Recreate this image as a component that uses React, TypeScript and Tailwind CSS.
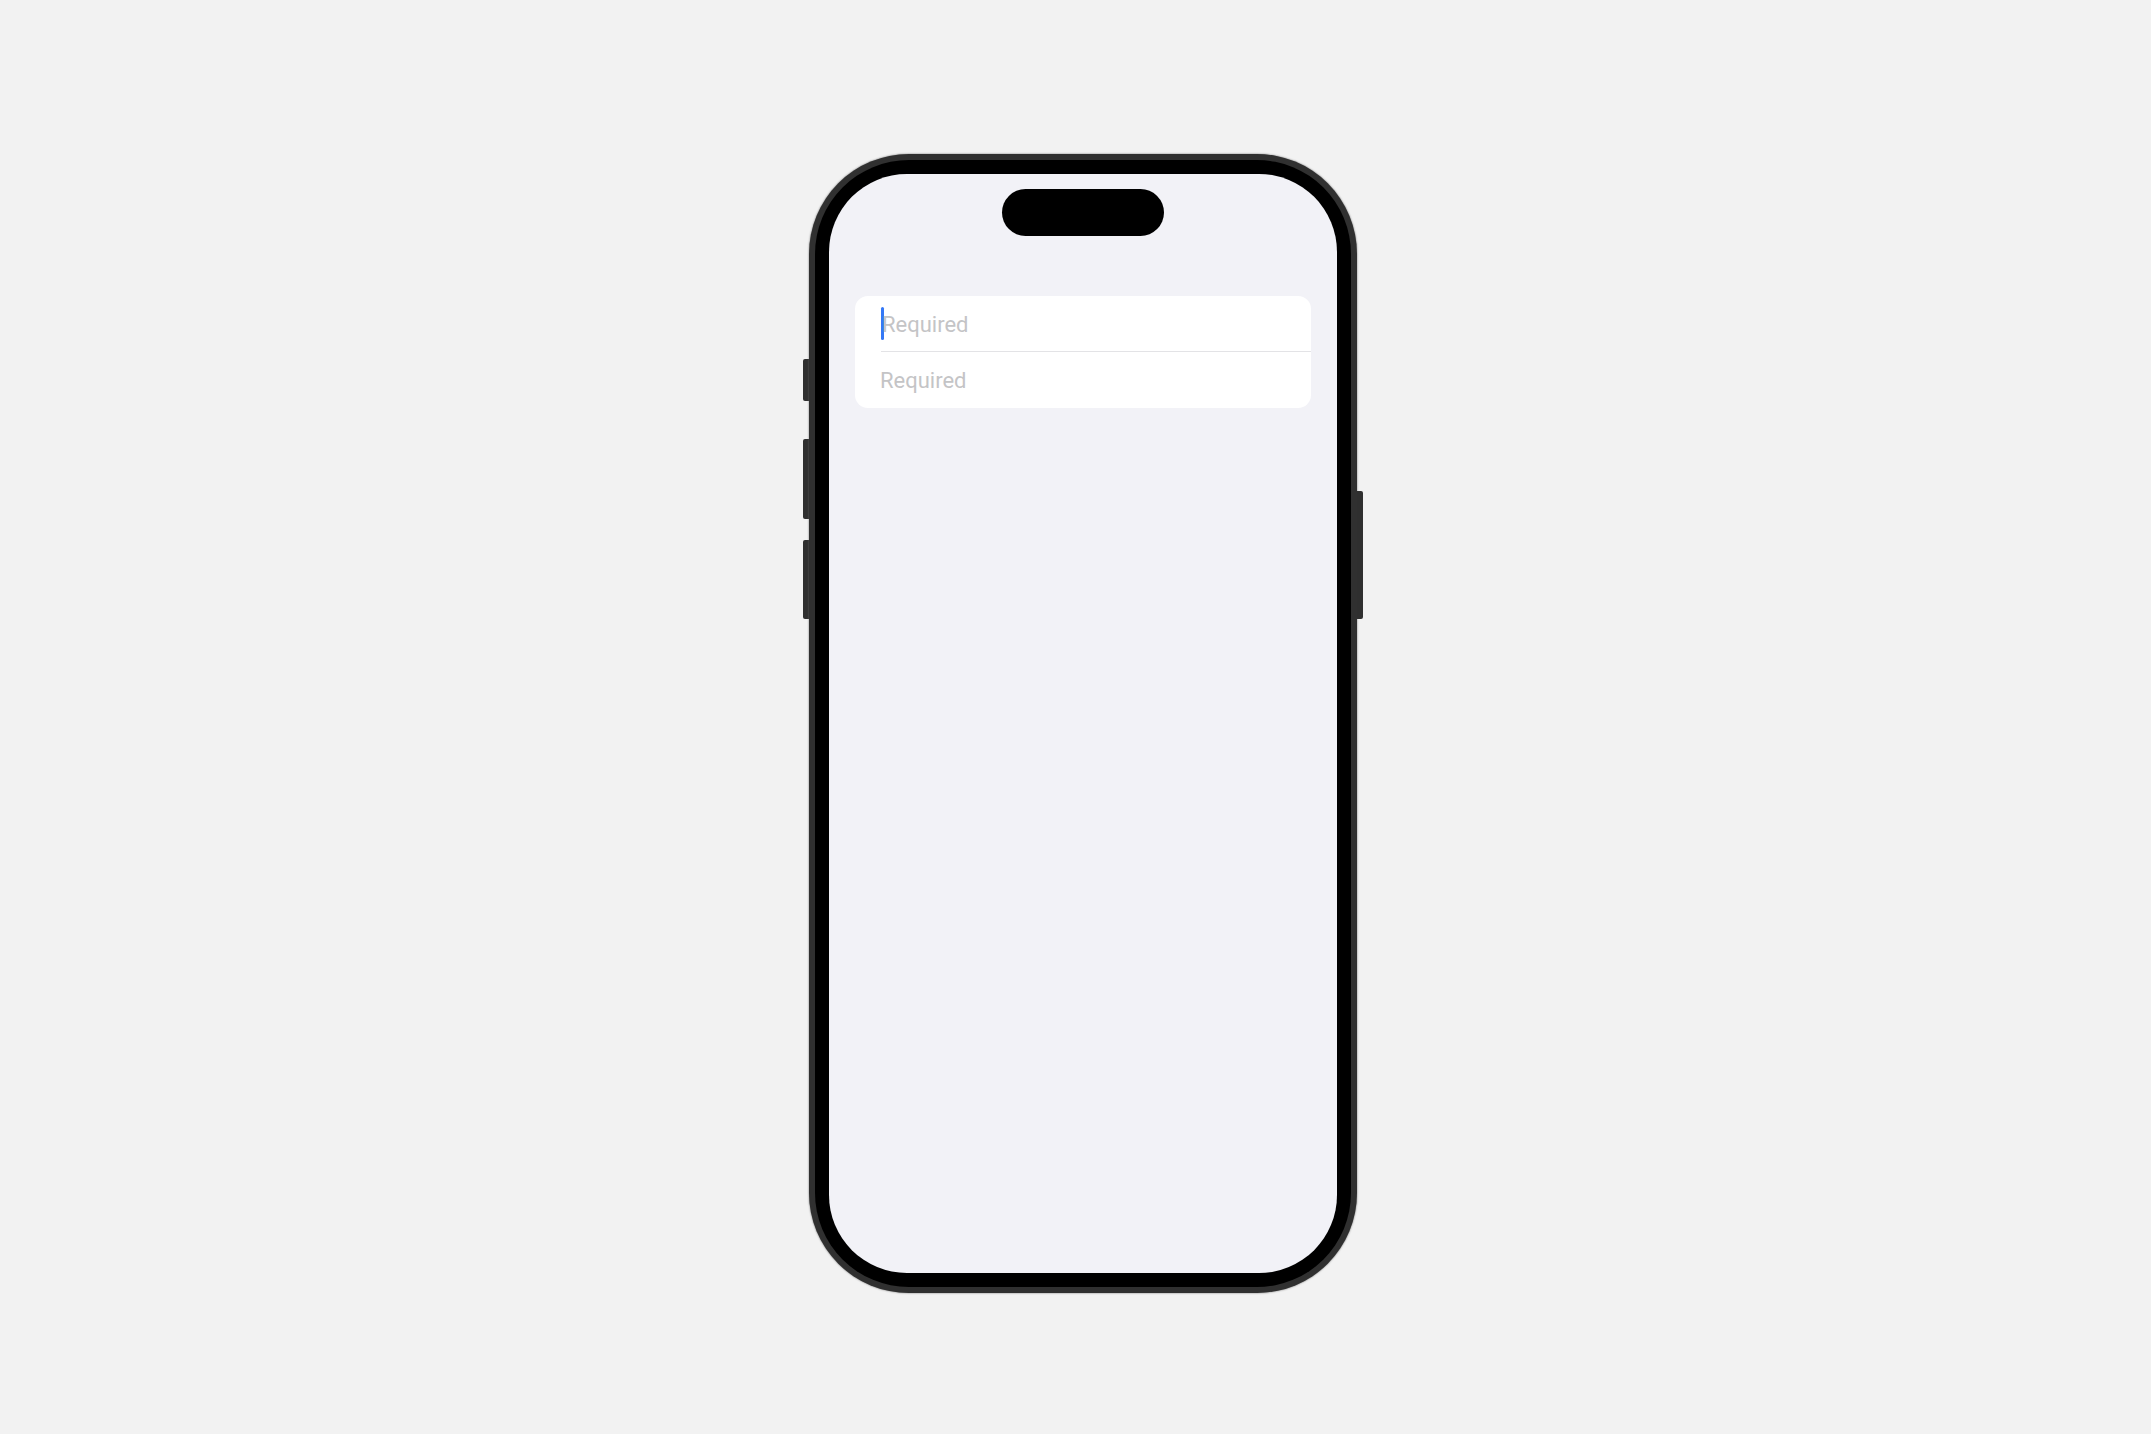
import React from 'react';

function Field({ focused, last }: { focused?: boolean; last?: boolean }) {
  return (
    <div className="pl-[26px]">
      <div
        className={`flex h-[56px] items-center ${last ? '' : 'border-b border-[#e3e3e6]'}`}
      >
        {focused && <div className="h-[33px] w-[3px] rounded-full bg-[#3478f6]" />}
        <span
          className={`pt-[2px] text-[22px] leading-none text-[#c4c4c6] ${focused ? '-ml-[2px]' : '-ml-px'}`}
          style={{ fontFamily: 'Roboto, "Noto Sans", sans-serif' }}
        >
          Required
        </span>
      </div>
    </div>
  );
}

export default function App() {
  return (
    <div className="flex min-h-screen w-full items-start bg-[#f2f2f2] pl-[803px] pt-[154px]">
      {/* left buttons: action, volume up, volume down */}
      <div className="flex w-[6px] flex-col pt-[205px]">
        <div className="h-[42px] rounded-l-[2px] bg-[#2f2f2f]" />
        <div className="mt-[38px] h-[80px] rounded-l-[2px] bg-[#2f2f2f]" />
        <div className="mt-[21px] h-[79px] rounded-l-[2px] bg-[#2f2f2f]" />
      </div>

      {/* iPhone frame */}
      <div className="h-[1139px] w-[548px] rounded-[100px] bg-[#303030] p-[6px] shadow-[0_0_2px_#666]">
        <div className="h-full w-full rounded-[94px] bg-black p-[14px]">
          {/* screen */}
          <div className="flex h-full w-full flex-col items-center rounded-[78px] bg-[#f2f2f7] pt-[15px]">
            {/* dynamic island */}
            <div className="h-[47px] w-[162px] rounded-[24px] bg-black" />

            {/* form */}
            <div className="mt-[60px] w-[456px] overflow-hidden rounded-[13px] bg-white">
              <Field focused />
              <Field last />
            </div>
          </div>
        </div>
      </div>

      {/* side button */}
      <div className="flex w-[6px] flex-col pt-[337px]">
        <div className="h-[128px] rounded-r-[2px] bg-[#2f2f2f]" />
      </div>
    </div>
  );
}
